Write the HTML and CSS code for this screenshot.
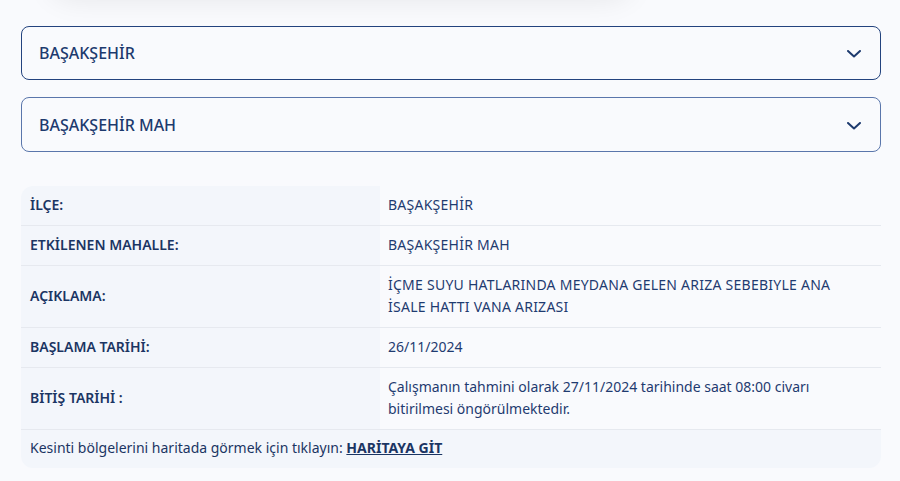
FILE: index.html
```html
<!DOCTYPE html>
<html lang="tr">
<head>
<meta charset="utf-8">
<link rel="stylesheet" href="styles.css">
</head>
<body>
<div class="page">
  <div class="topcard"></div>
  <div class="select select-active">
    <span>BAŞAKŞEHİR</span>
    <svg class="chev" width="14" height="8" viewBox="0 0 14 8"><path d="M1 1l6 5.5L13 1" fill="none" stroke="#1d3a6e" stroke-width="2" stroke-linecap="round" stroke-linejoin="round"/></svg>
  </div>
  <div class="select">
    <span>BAŞAKŞEHİR MAH</span>
    <svg class="chev" width="14" height="8" viewBox="0 0 14 8"><path d="M1 1l6 5.5L13 1" fill="none" stroke="#1d3a6e" stroke-width="2" stroke-linecap="round" stroke-linejoin="round"/></svg>
  </div>
  <div class="info">
    <div class="row"><div class="lbl">İLÇE:</div><div class="val caps">BAŞAKŞEHİR</div></div>
    <div class="row"><div class="lbl">ETKİLENEN MAHALLE:</div><div class="val caps">BAŞAKŞEHİR MAH</div></div>
    <div class="row"><div class="lbl">AÇIKLAMA:</div><div class="val caps">İÇME SUYU HATLARINDA MEYDANA GELEN ARIZA SEBEBIYLE ANA<br>İSALE HATTI VANA ARIZASI</div></div>
    <div class="row"><div class="lbl">BAŞLAMA TARİHİ:</div><div class="val">26/11/2024</div></div>
    <div class="row"><div class="lbl">BİTİŞ TARİHİ :</div><div class="val">Çalışmanın tahmini olarak 27/11/2024 tarihinde saat 08:00 civarı<br>bitirilmesi öngörülmektedir.</div></div>
    <div class="foot">Kesinti bölgelerini haritada görmek için tıklayın: <a href="#">HARİTAYA GİT</a></div>
  </div>
</div>
</body>
</html>
```
FILE: styles.css
```css
html, body {
  margin: 0;
  padding: 0;
  background: #f9fafd;
  font-family: "Noto Sans", "DejaVu Sans", sans-serif;
  color: #1d3a6e;
}
.page {
  padding: 0 19px 0 21px;
  overflow: hidden;
  height: 481px;
  box-sizing: border-box;
}
.topcard {
  height: 40px;
  margin: -48px 0 0 30px;
  width: 580px;
  border-radius: 20px;
  background: #f9fafd;
  box-shadow: 0 6px 30px rgba(0,0,0,0.09);
  margin-bottom: 34px;
}
.select {
  height: 52px;
  border: 1px solid #23437e;
  border-radius: 8px;
  display: flex;
  align-items: center;
  justify-content: space-between;
  padding: 0 19px 0 17px;
  font-size: 16px;
  font-weight: 500;
  color: #1d3a6e;
  margin-bottom: 17px;
}
.select + .select {
  height: 53px;
  border-color: #5a76ab;
  margin-bottom: 34px;
}
.chev { display: block; margin-top: 2px; }
.info {
  border-radius: 12px;
  overflow: hidden;
  font-size: 14px;
  line-height: 22px;
}
.row {
  display: grid;
  grid-template-columns: 359px 1fr;
  border-bottom: 1px solid #e6e9ef;
}
.lbl {
  background: #f3f6fb;
  padding: 8px 9px 9px;
  font-weight: 600;
  color: #1b3563;
  display: flex;
  align-items: center;
}
.val {
  background: #f9fafd;
  padding: 8px 8px 9px;
  color: #1f3b70;
}
.val.caps { letter-spacing: 0.25px; }
.foot {
  background: #f3f6fb;
  padding: 7px 9px 9px;
  color: #1b3563;
}
.foot a {
  color: #1b3563;
  font-weight: 700;
  text-decoration: underline;
}
```
